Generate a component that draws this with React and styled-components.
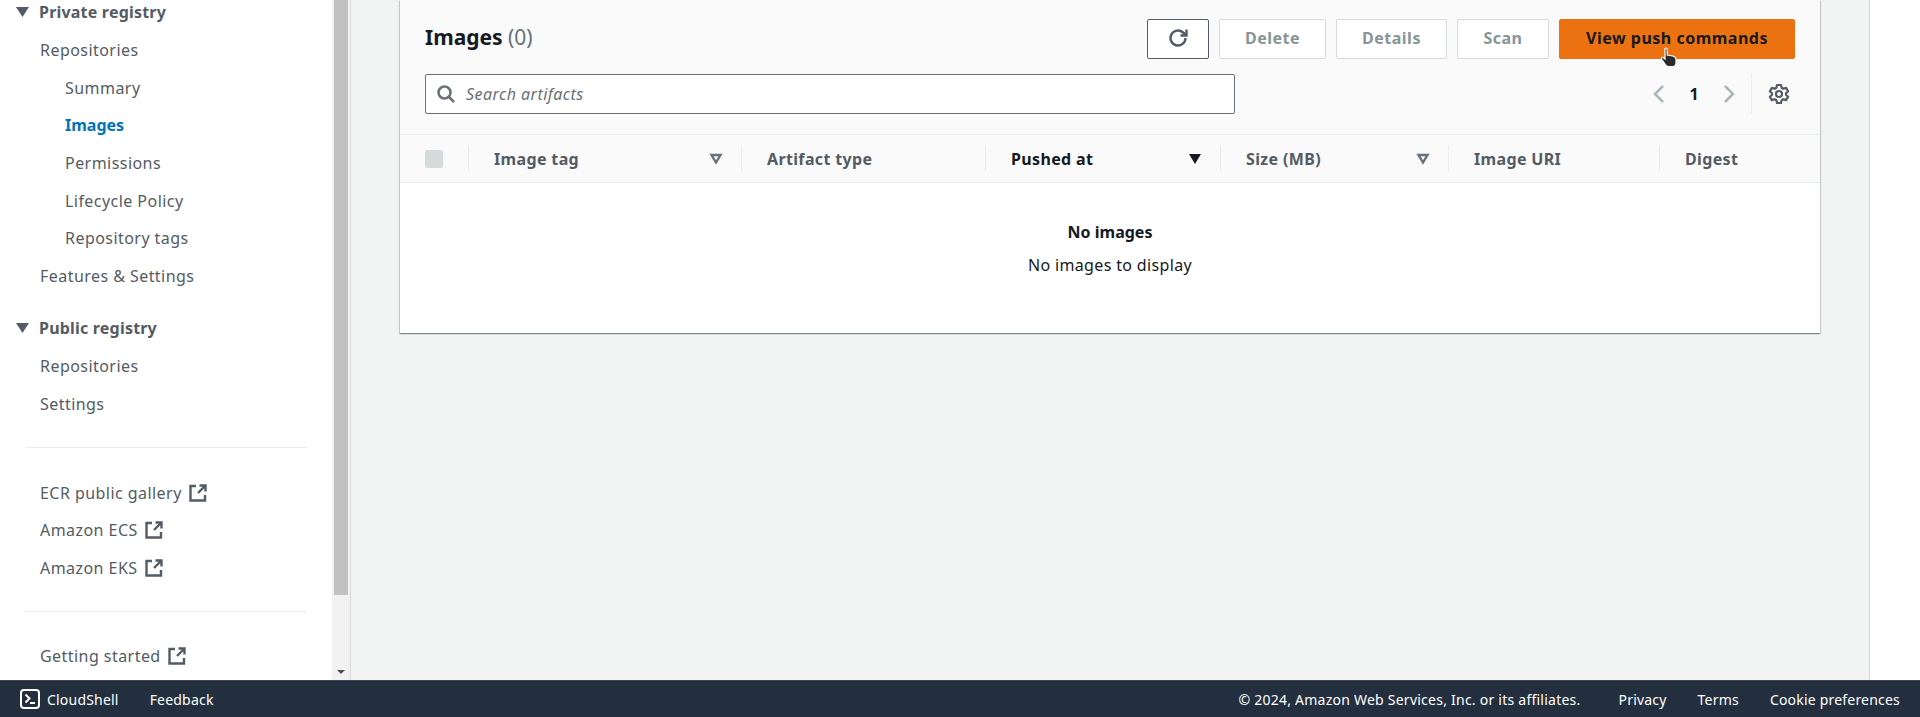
import React from 'react'
import styled, { createGlobalStyle } from 'styled-components'

const GlobalStyle = createGlobalStyle`
  html, body {
    margin: 0;
    padding: 0;
    height: 100%;
    overflow: hidden;
    background: #fff;
    font-family: "Noto Sans", "Open Sans", sans-serif;
    font-size: 16px;
    color: #16191f;
  }
`

const Page = styled.div`
  height: 717px;
  display: flex;
  flex-direction: column;
  position: relative;
`

const Body = styled.div`
  flex: 1;
  min-height: 0;
  display: flex;
`

const Sidebar = styled.nav`
  width: 332px;
  flex: none;
  box-sizing: border-box;
  overflow: hidden;
  background: #fff;
  margin-top: -7px;
`

const SectionTitle = styled.div`
  height: 38px;
  display: flex;
  align-items: center;
  gap: 10px;
  padding-left: 16px;
  font-weight: 700;
  color: #545b64;
  letter-spacing: 0.2px;
`

const Caret = styled.svg`
  width: 13px;
  height: 10px;
  fill: #545b64;
  flex: none;
`

const NavItem = styled.div`
  height: 37.6px;
  padding-top: 1px;
  box-sizing: border-box;
  display: flex;
  align-items: center;
  gap: 5px;
  padding-left: ${(p) => (p.$sub ? '65px' : '40px')};
  color: ${(p) => (p.$active ? '#0073bb' : '#545b64')};
  font-weight: ${(p) => (p.$active ? 700 : 400)};
  letter-spacing: ${(p) => (p.$active ? 0 : '0.45px')};
`

const NavList = styled.div`
  margin-bottom: 15px;
`

const NavRule = styled.hr`
  border: 0;
  border-top: 1px solid #eaeded;
  margin: 25px 0 25px 25px;
  width: 282px;
`

const ScrollTrack = styled.div`
  width: 18px;
  flex: none;
  background: #f1f1f1;
  display: flex;
  flex-direction: column;
  align-items: flex-start;
  justify-content: space-between;
`

const ScrollThumb = styled.div`
  width: 14px;
  height: 595px;
  background: #c1c1c1;
  margin-left: 2px;
`

const ScrollArrow = styled.div`
  width: 0;
  height: 0;
  border-left: 4px solid transparent;
  border-right: 4px solid transparent;
  border-top: 4px solid #505050;
  margin: 0 0 6px 5px;
`

const Main = styled.main`
  flex: 1;
  min-width: 0;
  background: #f2f3f3;
  border-left: 1px solid #d5dbdb;
  border-right: 1px solid #d5dbdb;
  padding: 0 49px;
`

const RightGutter = styled.div`
  width: 50px;
  flex: none;
  background: #fff;
`

const Card = styled.section`
  background: #fff;
  box-shadow: 0 1px 1px 0 rgba(0, 28, 36, 0.3), 1px 1px 1px 0 rgba(0, 28, 36, 0.15), -1px 1px 1px 0 rgba(0, 28, 36, 0.15);
`

const CardHeader = styled.div`
  background: #fafafa;
  padding: 19px 25px 20px;
  display: flex;
  flex-direction: column;
  gap: 15px;
  border-bottom: 1px solid #eaeded;
`

const HeaderRow = styled.div`
  display: flex;
  align-items: center;
  justify-content: space-between;
`

const Title = styled.h2`
  margin: 0;
  font-size: 21px;
  line-height: 36px;
  padding-bottom: 4px;
  font-weight: 700;
  color: #16191f;
  span {
    font-weight: 400;
    color: #687078;
  }
`

const Actions = styled.div`
  display: flex;
  gap: 10px;
`

const Button = styled.button`
  height: 40px;
  width: ${(p) => p.$w}px;
  box-sizing: border-box;
  padding: 0 0 2px;
  border-radius: 2px;
  border: 1px solid ${(p) => (p.$primary ? '#ec7211' : p.$enabled ? '#545b64' : '#d5dbdb')};
  background: ${(p) => (p.$primary ? '#ec7211' : '#fff')};
  color: ${(p) => (p.$primary ? '#16191f' : '#879596')};
  font: 700 16px "Noto Sans", sans-serif;
  letter-spacing: 0.5px;
  display: flex;
  align-items: center;
  justify-content: center;
`

const SearchBox = styled.div`
  width: 810px;
  height: 40px;
  box-sizing: border-box;
  border: 1px solid #687078;
  border-radius: 2px;
  background: #fff;
  display: flex;
  align-items: center;
  gap: 10px;
  padding-left: 10px;
  color: #687078;
  font-style: italic;
  letter-spacing: 0.45px;
`

const Pager = styled.div`
  display: flex;
  align-items: center;
  height: 40px;
  margin-right: 5px;
`

const PageNumber = styled.span`
  width: 56px;
  text-align: center;
  font-weight: 700;
  color: #16191f;
`

const PagerDivider = styled.div`
  width: 1px;
  height: 40px;
  background: #eaeded;
  margin: 0 16px 0 15px;
`

const TableHead = styled.div`
  display: grid;
  grid-template-columns: 68px 273px 244px 235px 228px 211px 1fr;
  height: 48px;
  box-sizing: border-box;
  background: #fafafa;
  border-bottom: 1px solid #eaeded;
  align-items: center;
`

const CheckCell = styled.div`
  padding-left: 25px;
  display: flex;
`

const Checkbox = styled.div`
  width: 18px;
  height: 18px;
  border-radius: 2px;
  background: #d5dbdb;
`

const HeadCell = styled.div`
  height: 25px;
  display: flex;
  align-items: center;
  justify-content: space-between;
  padding: 0 18px 0 25px;
  border-left: 1px solid #eaeded;
  font-weight: 700;
  letter-spacing: 0.35px;
  color: ${(p) => (p.$sorted ? '#16191f' : '#545b64')};
`

const SortIcon = styled.svg`
  width: 14px;
  height: 12px;
  flex: none;
`

const EmptyState = styled.div`
  height: 150px;
  padding-top: 33px;
  box-sizing: border-box;
  text-align: center;
  line-height: 33px;
  color: #16191f;
  letter-spacing: 0.35px;
  strong {
    display: block;
    font-weight: 700;
    letter-spacing: 0;
  }
`

const Footer = styled.footer`
  height: 37px;
  flex: none;
  box-sizing: border-box;
  background: #232f3e;
  border-top: 1px solid #414750;
  color: #fff;
  display: flex;
  align-items: center;
  justify-content: space-between;
  padding: 0 20px;
  font-size: 14px;
  letter-spacing: 0.2px;
`

const FooterGroup = styled.div`
  display: flex;
  align-items: center;
  gap: 31px;
`

const Copyright = styled.span`
  margin-right: 7px;
  letter-spacing: 0.24px;
`

const ShellLink = styled.div`
  display: flex;
  align-items: center;
  gap: 7px;
`

const Cursor = styled.svg`
  position: absolute;
  left: 1660px;
  top: 47px;
  width: 19px;
  height: 21px;
`

const CaretDown = () => (
  <Caret viewBox="0 0 13 10"><path d="M0 0h13L6.500 10z" /></Caret>
)

const ExternalIcon = styled.svg`
  flex: none;
  width: 18px;
  height: 18px;
  margin-left: 2px;
  fill: none;
  stroke: #545b64;
  stroke-width: 2.4;
`

const External = () => (
  <ExternalIcon viewBox="0 0 18 18">
    <path d="M7 2H1.500v14.500H16V11M10.500 1.500h6V7.500M16 2L9 9" />
  </ExternalIcon>
)

const SortArrow = ({ filled }) => (
  <SortIcon viewBox="0 0 14 12">
    {filled
      ? <path d="M1 1h12L7 11z" fill="#16191f" />
      : <path d="M2.500 2h9L7 9.500z" fill="none" stroke="#687078" strokeWidth="2.400" />}
  </SortIcon>
)

const navTop = [
  { label: 'Repositories' },
  { label: 'Summary', sub: true },
  { label: 'Images', sub: true, active: true },
  { label: 'Permissions', sub: true },
  { label: 'Lifecycle Policy', sub: true },
  { label: 'Repository tags', sub: true },
  { label: 'Features & Settings' },
]

const columns = ['Image tag', 'Artifact type', 'Pushed at', 'Size (MB)', 'Image URI', 'Digest']

const App = () => {
  return <Page>
    <GlobalStyle />
    <Body>
      <Sidebar>
        <SectionTitle><CaretDown />Private registry</SectionTitle>
        <NavList>
          {navTop.map((n) => (
            <NavItem key={n.label} $sub={n.sub} $active={n.active}>{n.label}</NavItem>
          ))}
        </NavList>
        <SectionTitle><CaretDown />Public registry</SectionTitle>
        <NavItem>Repositories</NavItem>
        <NavItem>Settings</NavItem>
        <NavRule />
        <NavItem>ECR public gallery <External /></NavItem>
        <NavItem>Amazon ECS <External /></NavItem>
        <NavItem>Amazon EKS <External /></NavItem>
        <NavRule />
        <NavItem>Getting started <External /></NavItem>
      </Sidebar>
      <ScrollTrack>
        <ScrollThumb />
        <ScrollArrow />
      </ScrollTrack>
      <Main>
        <Card>
          <CardHeader>
            <HeaderRow>
              <Title>Images <span>(0)</span></Title>
              <Actions>
                <Button $w={62} $enabled aria-label="Refresh">
                  <svg width="22" height="22" viewBox="0 0 22 22" fill="none" stroke="#545b64" strokeWidth="2.400">
                    <path d="M18.500 11a7.500 7.500 0 1 1-2.400-5.500L19 8" />
                    <path d="M19.500 2.500V8.500H13.500" />
                  </svg>
                </Button>
                <Button $w={107}>Delete</Button>
                <Button $w={111}>Details</Button>
                <Button $w={92}>Scan</Button>
                <Button $w={236} $primary>View push commands</Button>
              </Actions>
            </HeaderRow>
            <HeaderRow>
              <SearchBox>
                <svg width="20" height="20" viewBox="0 0 20 20" fill="none" stroke="#687078" strokeWidth="2.500">
                  <circle cx="8.500" cy="8.500" r="6" />
                  <path d="M13 13l5 5" />
                </svg>
                Search artifacts
              </SearchBox>
              <Pager>
                <svg width="14" height="18" viewBox="0 0 14 18" fill="none" stroke="#aab7b8" strokeWidth="2.500">
                  <path d="M11 1L3 9l8 8" />
                </svg>
                <PageNumber>1</PageNumber>
                <svg width="14" height="18" viewBox="0 0 14 18" fill="none" stroke="#aab7b8" strokeWidth="2.500">
                  <path d="M3 1l8 8-8 8" />
                </svg>
                <PagerDivider />
                <svg width="22" height="22" viewBox="0 0 22 22" fill="none" stroke="#545b64" strokeWidth="2.200" strokeLinejoin="round">
                  <circle cx="11" cy="11" r="3" />
                  <path d="M9 2h4l.6 2.800 1.700 1 2.800-.9 2 3.400-2.100 1.900v1.600l2.100 1.900-2 3.400-2.800-.9-1.700 1L13 20H9l-.6-2.800-1.700-1-2.800.9-2-3.400 2.100-1.900v-1.600L1.900 8.300l2-3.400 2.800.9 1.700-1z" />
                </svg>
              </Pager>
            </HeaderRow>
          </CardHeader>
          <TableHead>
            <CheckCell><Checkbox /></CheckCell>
            {columns.map((c) => (
              <HeadCell key={c} $sorted={c === 'Pushed at'}>
                {c}
                {c === 'Image tag' || c === 'Size (MB)' ? <SortArrow /> : null}
                {c === 'Pushed at' ? <SortArrow filled /> : null}
              </HeadCell>
            ))}
          </TableHead>
          <EmptyState>
            <strong>No images</strong>
            No images to display
          </EmptyState>
        </Card>
      </Main>
      <RightGutter />
    </Body>
    <Footer>
      <FooterGroup>
        <ShellLink>
          <svg width="20" height="20" viewBox="0 0 20 20" fill="none" stroke="#fff" strokeWidth="2">
            <rect x="1" y="1" width="18" height="18" rx="3" />
            <path d="M5.500 5.500L9.500 9.500 5.500 13.500M10 14h5" />
          </svg>
          CloudShell
        </ShellLink>
        <span>Feedback</span>
      </FooterGroup>
      <FooterGroup>
        <Copyright>© 2024, Amazon Web Services, Inc. or its affiliates.</Copyright>
        <span>Privacy</span>
        <span>Terms</span>
        <span>Cookie preferences</span>
      </FooterGroup>
    </Footer>
    <Cursor viewBox="0 0 19 21">
      <path d="M5 1.500c1-.8 2.200-.3 2.200 1V8l5.500 1c2 .4 3.300 1.600 3.300 3.500V16c0 2-1.500 3.500-3.500 3.500H8.500c-1.300 0-2.300-.6-3-1.700L1.500 12c-.6-1 .6-2.200 1.700-1.400L5 12V1.500z" fill="#2a2a2a" stroke="#fff" strokeWidth="1.200" />
    </Cursor>
  </Page>
}

export default App
